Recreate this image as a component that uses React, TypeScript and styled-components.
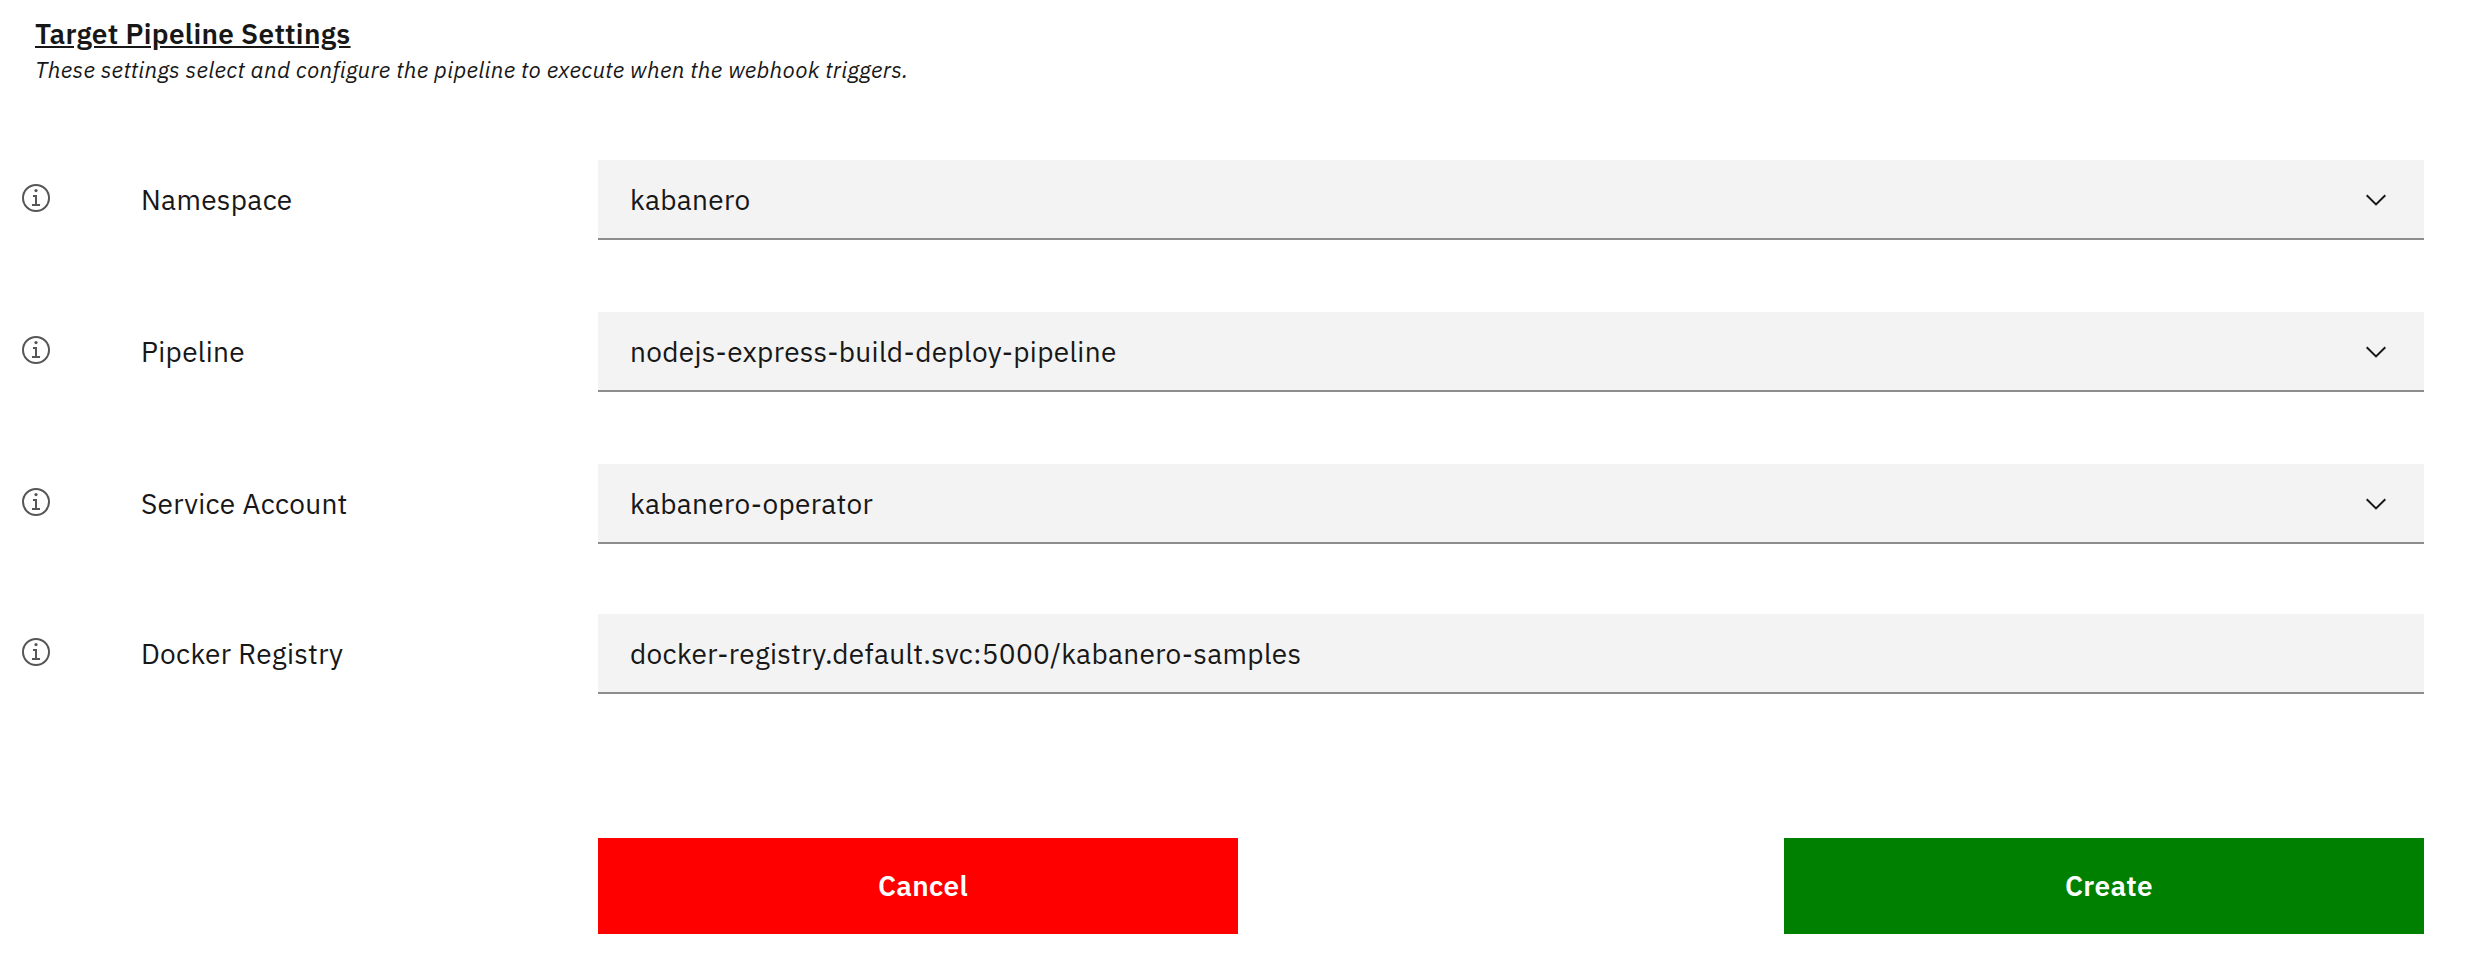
import React from 'react';
import styled, { createGlobalStyle } from 'styled-components';

const GlobalStyle = createGlobalStyle`
  *, *::before, *::after { box-sizing: border-box; }
  body {
    margin: 0;
    background: #fff;
    color: #171717;
    font-family: 'IBM Plex Sans', 'Open Sans', 'Noto Sans', sans-serif;
    font-size: 28px;
    letter-spacing: 0.32px;
  }
`;

const Page = styled.main`
  display: flex;
  flex-direction: column;
  min-height: 966px;
  padding: 16px 42px 32px 22px;
`;

const Header = styled.header`
  padding-left: 13px;
`;

const Title = styled.h1`
  margin: 0;
  width: fit-content;
  font-size: 28px;
  font-weight: 600;
  line-height: 36px;
  text-decoration: underline;
`;

const Subtitle = styled.p`
  margin: 3px 0 0;
  font-size: 22.4px;
  font-style: italic;
  line-height: 30px;
  white-space: nowrap;
`;

const Fields = styled.section`
  display: flex;
  flex-direction: column;
  gap: 72px;
  margin-top: 75px;
`;

const Row = styled.div<{ $raised?: boolean }>`
  display: grid;
  grid-template-columns: 119px 457px 1826px;
  height: 80px;
  margin-top: ${p => (p.$raised ? '-2px' : '0')};
`;

const InfoButton = styled.button`
  display: flex;
  align-self: start;
  width: 28px;
  height: 28px;
  margin: 24px 0 0;
  padding: 0;
  border: 0;
  background: none;
  color: #565656;
`;

const Label = styled.label`
  line-height: 80px;
  white-space: nowrap;
`;

const Control = styled.div`
  display: flex;
  align-items: center;
  justify-content: space-between;
  height: 80px;
  padding: 2px 37px 0 32px;
  border-bottom: 2px solid #8d8d8d;
  background: #f3f3f3;
  line-height: 76px;
  white-space: nowrap;
`;

const Actions = styled.footer`
  display: flex;
  justify-content: space-between;
  margin: 144px 0 0 576px;
`;

const ActionButton = styled.button<{ $color: string }>`
  width: 640px;
  height: 96px;
  padding: 0 0 2px 10px;
  border: 0;
  background: ${p => p.$color};
  color: #fff;
  font: inherit;
  font-weight: 600;
  letter-spacing: inherit;
`;

const InfoIcon = () => (
  <svg width="28" height="28" viewBox="0 0 28 28" fill="none" aria-hidden="true">
    <circle cx="14" cy="14" r="13" stroke="currentColor" strokeWidth="2" />
    <circle cx="14" cy="6.6" r="1.6" fill="currentColor" />
    <path d="M11 12h4M14 12v9M10 21h8" stroke="currentColor" strokeWidth="2" />
  </svg>
);

const Chevron = () => (
  <svg width="22" height="14" viewBox="0 0 22 14" fill="none" aria-hidden="true">
    <path d="M1.7 2.2 11 11.4l9.3-9.2" stroke="#171717" strokeWidth="2" />
  </svg>
);

interface Field {
  label: string;
  value: string;
  select: boolean;
}

const fields: Field[] = [
  { label: 'Namespace', value: 'kabanero', select: true },
  { label: 'Pipeline', value: 'nodejs-express-build-deploy-pipeline', select: true },
  { label: 'Service Account', value: 'kabanero-operator', select: true },
  { label: 'Docker Registry', value: 'docker-registry.default.svc:5000/kabanero-samples', select: false },
];

export default function App() {
  return (
    <>
      <GlobalStyle />
      <Page>
        <Header>
          <Title>Target Pipeline Settings</Title>
          <Subtitle>These settings select and configure the pipeline to execute when the webhook triggers.</Subtitle>
        </Header>
        <Fields>
          {fields.map(field => (
            <Row key={field.label} $raised={!field.select}>
              <InfoButton aria-label={`About ${field.label}`}><InfoIcon /></InfoButton>
              <Label>{field.label}</Label>
              <Control>
                <span>{field.value}</span>
                {field.select && <Chevron />}
              </Control>
            </Row>
          ))}
        </Fields>
        <Actions>
          <ActionButton $color="#ff0000">Cancel</ActionButton>
          <ActionButton $color="#008000">Create</ActionButton>
        </Actions>
      </Page>
    </>
  );
}
